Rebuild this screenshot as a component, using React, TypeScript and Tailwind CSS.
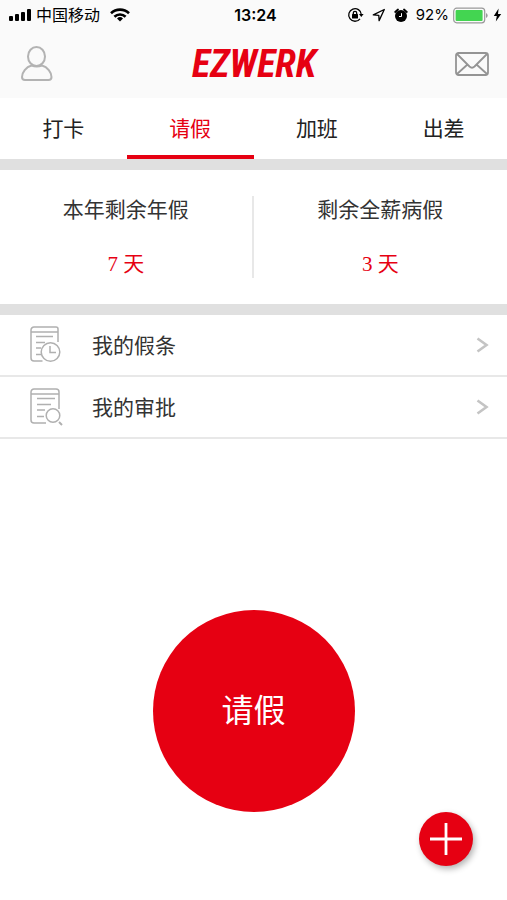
import React, { useState } from 'react';

const tabs = ['打卡', '请假', '加班', '出差'];

const balances = [
  { label: '本年剩余年假', days: 7 },
  { label: '剩余全薪病假', days: 3 },
];

const StatusBar: React.FC = () => (
  <div className="grid grid-cols-[1fr_auto_1fr] items-center h-[30px] pl-[9px] pr-[5px] text-black">
    <div className="flex items-center">
      <svg width="23" height="14" viewBox="0 0 23 14" aria-hidden="true">
        <rect x="0" y="8" width="4" height="5" rx="1" />
        <rect x="6" y="6" width="4" height="7" rx="1" />
        <rect x="12" y="4" width="4" height="9" rx="1" />
        <rect x="18" y="1" width="4" height="12" rx="1" />
      </svg>
      <span className="ml-1 pt-0.5 text-[16px] leading-5">中国移动</span>
      <svg className="ml-2.5" width="20" height="14" viewBox="0 0 20 14" fill="none" stroke="currentColor" strokeWidth="2.6" aria-hidden="true">
        <path d="M1 5.2a13 13 0 0 1 18 0" />
        <path d="M4.4 8.8a8 8 0 0 1 11.2 0" />
        <path d="M10 13.4l-3-3a4.3 4.3 0 0 1 6 0z" fill="currentColor" stroke="none" />
      </svg>
    </div>
    <time className="font-['Inter','Liberation_Sans',sans-serif] text-[16px] leading-5 font-semibold">13:24</time>
    <div className="flex items-center justify-end">
      <svg width="17" height="16" viewBox="0 0 17 16" fill="none" stroke="currentColor" strokeWidth="1.3" aria-hidden="true">
        <path d="M13 11.8A6.3 6.3 0 1 1 14.3 7.5" />
        <path d="M12 7h4.6l-2.3 3z" fill="currentColor" stroke="none" />
        <rect x="5" y="7" width="6" height="4.5" rx="0.5" fill="currentColor" stroke="none" />
        <path d="M6.3 7.5V6a1.7 1.7 0 0 1 3.4 0v1.5" />
      </svg>
      <svg className="ml-2" width="14" height="14" viewBox="0 0 14 14" fill="none" stroke="currentColor" strokeWidth="1.3" strokeLinejoin="round" aria-hidden="true">
        <path d="M12.3 1.5L1.3 6.9l5.5.4.3 5.3z" />
      </svg>
      <svg className="ml-2" width="14" height="15" viewBox="0 0 14 15" aria-hidden="true">
        <circle cx="7" cy="8" r="6" />
        <path d="M1.2 4l2.8-2.5M12.8 4l-2.8-2.5" stroke="currentColor" strokeWidth="1.8" strokeLinecap="round" />
        <path d="M7.5 5.2v3.3H5" fill="none" stroke="#fff" strokeWidth="1" />
      </svg>
      <span className="ml-2 font-['Inter','Liberation_Sans',sans-serif] text-[15px] leading-5">92%</span>
      <svg className="ml-1" width="36" height="17" viewBox="0 0 36 17" aria-hidden="true">
        <rect x="0.7" y="1.2" width="31" height="14.6" rx="3" fill="none" stroke="#999" strokeWidth="1.2" />
        <rect x="2.6" y="3" width="27" height="11" rx="1" fill="#43d551" />
        <path d="M33 6v5a2.7 2.7 0 0 0 0-5z" fill="#999" />
      </svg>
      <svg className="ml-1" width="9" height="14" viewBox="0 0 9 14" aria-hidden="true">
        <path d="M5.6 0.5L0.8 8h3L2.8 13.5 8.2 6H5z" />
      </svg>
    </div>
  </div>
);

const PersonIcon = () => (
  <svg width="32" height="36" viewBox="0 0 32 36" fill="none" stroke="#b3b3b3" strokeWidth="2" aria-hidden="true">
    <ellipse cx="15.5" cy="10.5" rx="8.5" ry="9.5" />
    <path d="M10.5 19.5C5 21 1 26.5 1 31c0 2 1 3 3 3h23.5c2 0 3-1 3-3 0-4.5-4-10-9.5-11.5-3.5 1.2-7 1.2-10.5 0z" />
  </svg>
);

const MailIcon = () => (
  <svg width="34" height="24" viewBox="0 0 34 24" fill="none" stroke="#949494" strokeWidth="1.8" strokeLinejoin="round" aria-hidden="true">
    <rect x="1" y="1" width="32" height="22" rx="2.5" />
    <path d="M2 2l12.5 12.5c1.8 1.7 3.2 1.7 5 0L32 2M2 22l10.5-9.5M32 22l-10.5-9.5" />
  </svg>
);

const LeaveNoteIcon = () => (
  <svg width="34" height="38" viewBox="0 0 34 38" fill="none" stroke="#b0b0b0" strokeWidth="1.5" aria-hidden="true">
    <path d="M12.5 35H4a3 3 0 0 1-3-3V4a3 3 0 0 1 3-3h22a2 2 0 0 1 2 2v13M1.5 6H28M6 10.5h17M6 16.5h9M6 22h5M6 28.5h5" />
    <circle cx="20.5" cy="26" r="9.3" />
    <path d="M20 20v6.5h6" />
  </svg>
);

const ApprovalIcon = () => (
  <svg width="34" height="38" viewBox="0 0 34 38" fill="none" stroke="#b0b0b0" strokeWidth="1.5" aria-hidden="true">
    <path d="M16 35H4a3 3 0 0 1-3-3V4a3 3 0 0 1 3-3h22a3 3 0 0 1 3 3v17M1.5 6H29M7 10.5h18M7 16.5h14M7 22h8M7 28.5h7" />
    <circle cx="23" cy="27.5" r="6.8" />
    <path d="M29 34l3 3" strokeWidth="2" />
  </svg>
);

const links = [
  { label: '我的假条', icon: <LeaveNoteIcon /> },
  { label: '我的审批', icon: <ApprovalIcon /> },
];

export default function App() {
  const [active, setActive] = useState('请假');

  return (
    <div className="relative min-h-screen bg-white text-[#333] font-['Liberation_Sans','Noto_Sans_CJK_SC',sans-serif]">
      <header className="bg-[#fafafa]">
        <StatusBar />
        <div className="flex items-center justify-between h-[68px] pl-[21px] pr-[18px]">
          <button type="button" aria-label="个人中心">
            <PersonIcon />
          </button>
          <h1 className="font-['Roboto_Condensed','Open_Sans_Condensed','Roboto','Liberation_Sans',sans-serif] text-[38px] leading-10 font-bold italic text-[#e60012]">
            EZWERK
          </h1>
          <button type="button" aria-label="消息">
            <MailIcon />
          </button>
        </div>
      </header>

      <nav className="grid grid-cols-4 border-b-[11px] border-[#e0e0e0]">
        {tabs.map((tab) => (
          <button
            key={tab}
            type="button"
            onClick={() => setActive(tab)}
            className={`h-[61px] border-b-4 pt-1 text-[21px] leading-8 ${
              tab === active ? 'border-[#e60012] text-[#e60012]' : 'border-transparent text-[#222]'
            }`}
          >
            {tab}
          </button>
        ))}
      </nav>

      <section className="grid grid-cols-2 py-[26px] border-b-[11px] border-[#e0e0e0] divide-x-2 divide-[#e8e8e8] text-center">
        {balances.map(({ label, days }) => (
          <div key={label} className="h-[82px]">
            <h2 className="text-[21px] leading-7">{label}</h2>
            <p className="mt-[26px] text-[21px] leading-7 text-[#e60012] font-['Liberation_Serif','Noto_Sans_CJK_SC',serif]">
              {days} 天
            </p>
          </div>
        ))}
      </section>

      <ul>
        {links.map(({ label, icon }) => (
          <li key={label} className="border-b-2 border-[#e8e8e8]">
            <a href="#" className="flex items-center h-[60px] pl-[30px] pr-[18px]">
              {icon}
              <span className="ml-7 pt-0.5 text-[21px] leading-8">{label}</span>
              <svg className="ml-auto" width="13" height="16" viewBox="0 0 13 16" fill="none" stroke="#c4c4c4" strokeWidth="2.6" aria-hidden="true">
                <path d="M1.5 1.5L10.5 8l-9 6.5" />
              </svg>
            </a>
          </li>
        ))}
      </ul>

      <main className="flex justify-center pt-[171px] pb-[88px]">
        <button type="button" className="size-[202px] rounded-full bg-[#e60012] text-[32px] leading-10 text-white">
          请假
        </button>
      </main>

      <button
        type="button"
        aria-label="新建"
        className="absolute right-[34px] bottom-[34px] flex size-[54px] items-center justify-center rounded-full bg-[#e60012] shadow-[2px_3px_6px_rgba(0,0,0,0.3)]"
      >
        <svg width="32" height="32" viewBox="0 0 32 32" stroke="#fff" strokeWidth="2.8" aria-hidden="true">
          <path d="M16 0v32M0 16h32" />
        </svg>
      </button>
    </div>
  );
}
